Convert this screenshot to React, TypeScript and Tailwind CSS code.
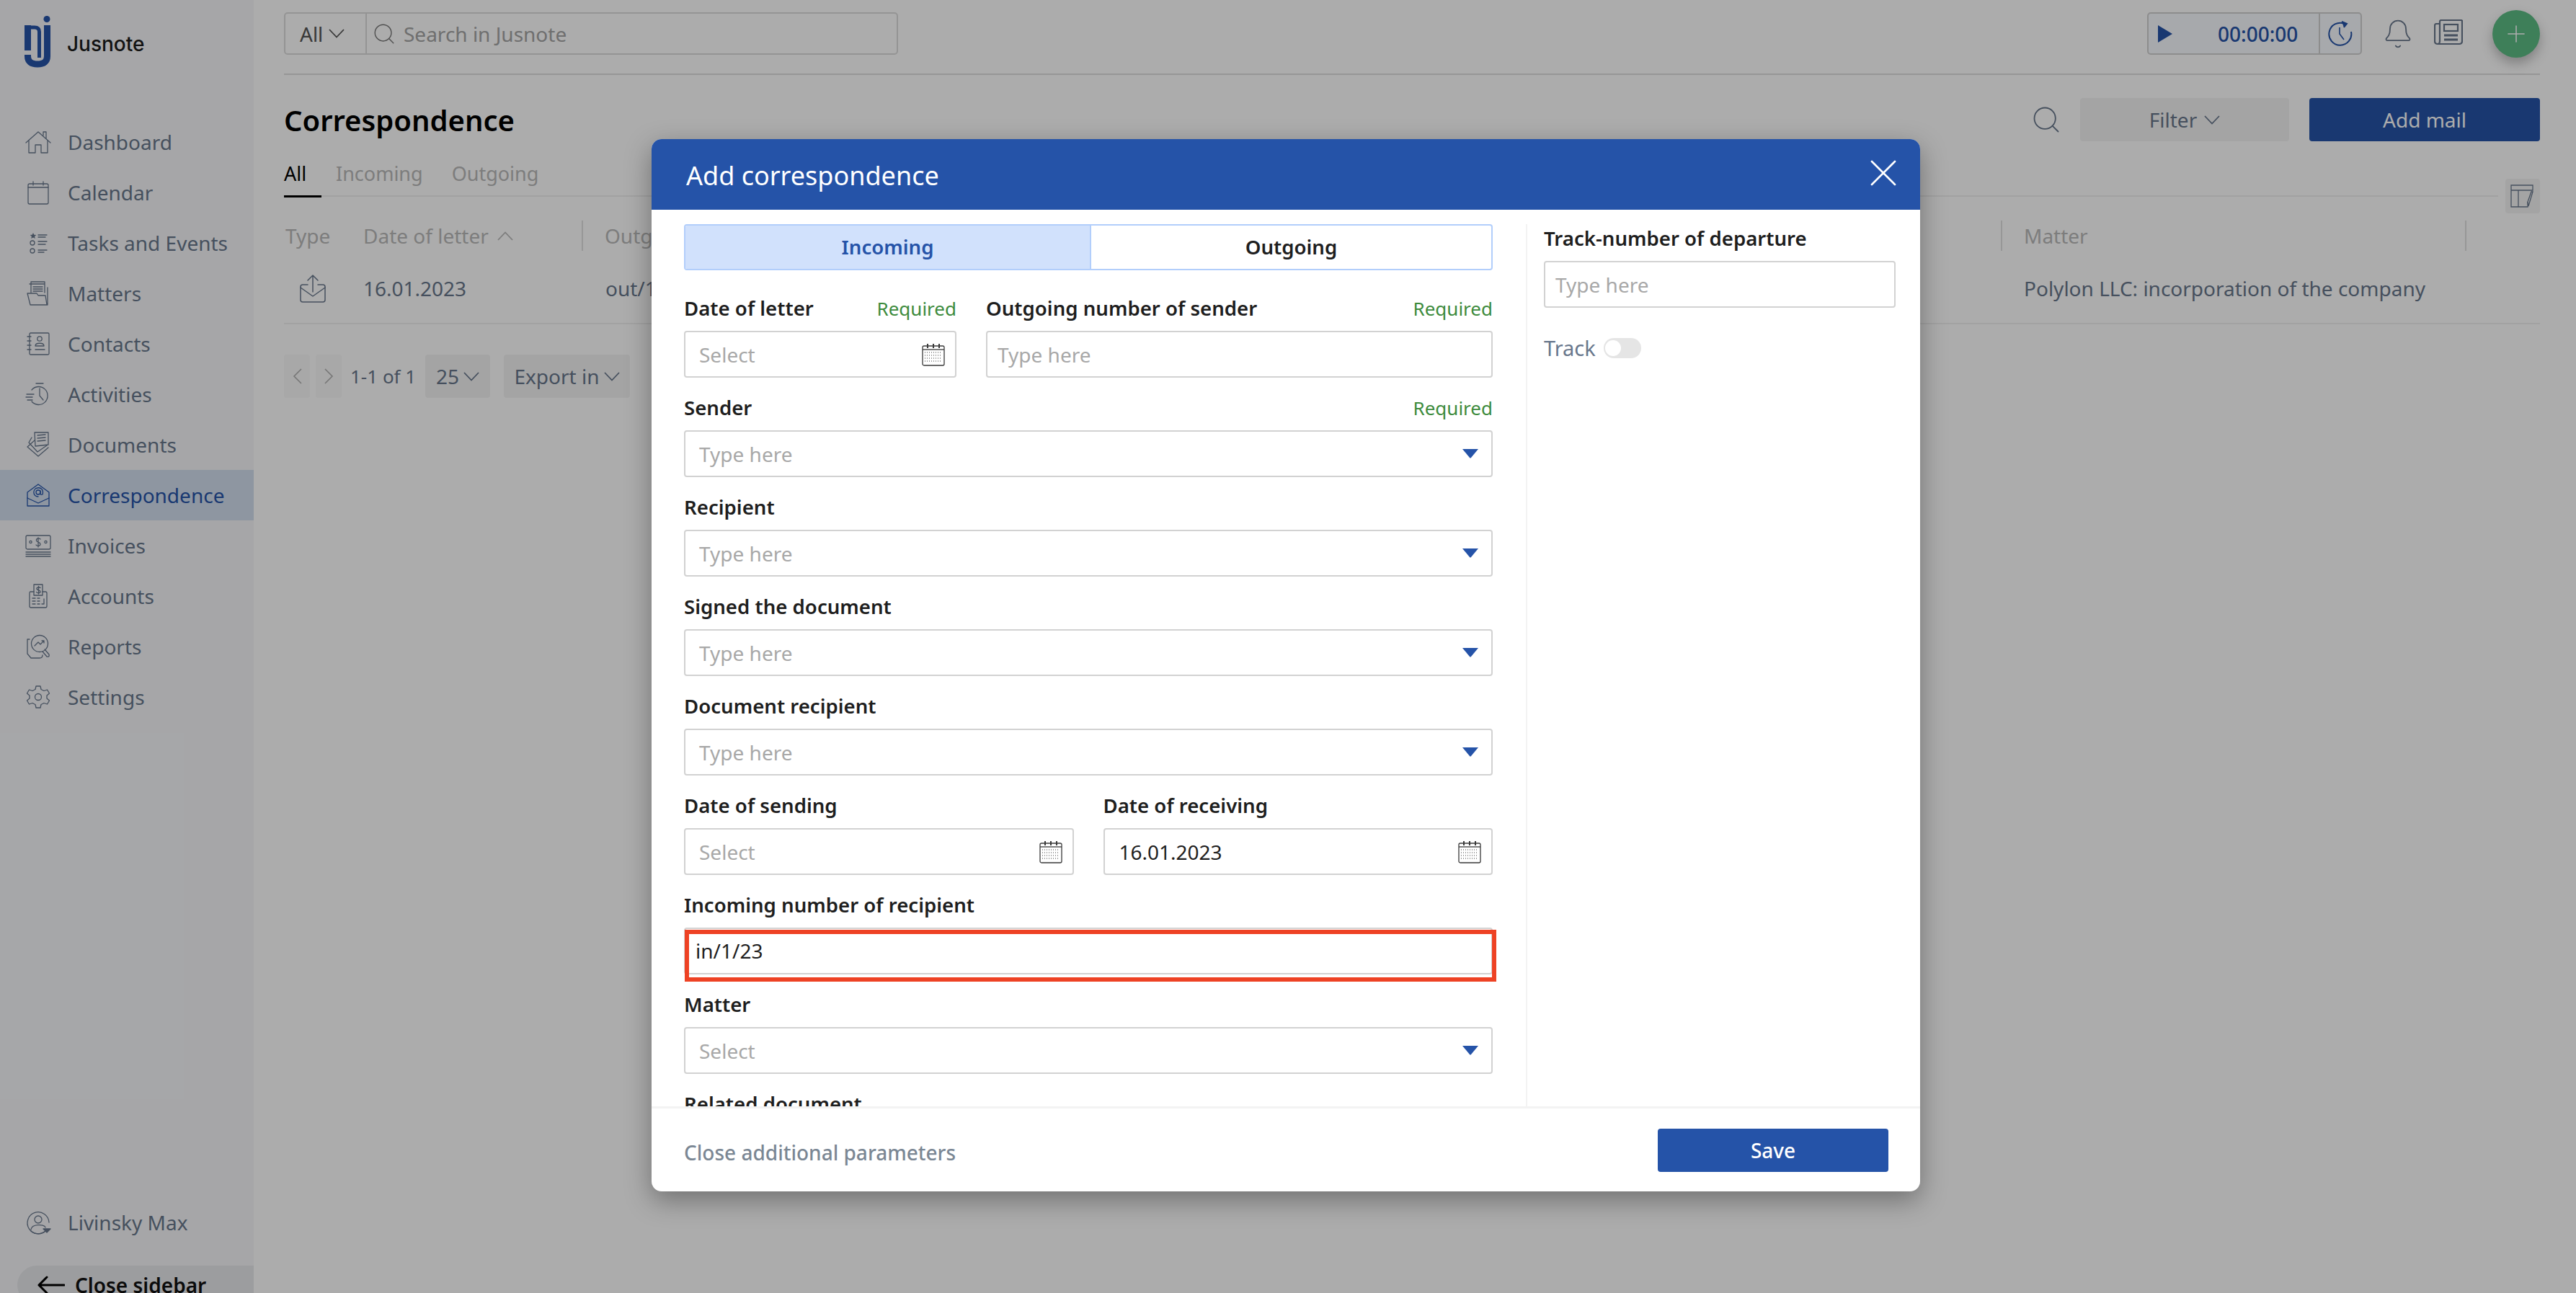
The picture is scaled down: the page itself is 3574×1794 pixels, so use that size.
import type { ReactNode } from 'react';
import { Search, Bell, Plus, X } from 'lucide-react';

const Ico = ({ children, size = 36 }: { children: ReactNode; size?: number }) => (
  <svg width={size} height={size} viewBox="0 0 36 36" fill="none" stroke="currentColor" strokeWidth="1.3" strokeLinecap="round" strokeLinejoin="round" className="shrink-0">
    {children}
  </svg>
);

const Chev = ({ dir = 'down', className = '' }: { dir?: 'down' | 'up'; className?: string }) => (
  <svg width="22" height="13" viewBox="0 0 22 13" fill="none" stroke="currentColor" strokeWidth="1.8" className={`shrink-0 ${className}`}>
    <path d={dir === 'down' ? 'M1 1 L11 11.5 L21 1' : 'M1 12 L11 1.5 L21 12'} />
  </svg>
);

const icons: Record<string, ReactNode> = {
  dashboard: (
    <>
      <path d="M1 19 L18 4 L35 19" />
      <path d="M5 16 V33 H14 V22 H22 V33 H31 V16" />
      <path d="M25 9 V4 H29 V13" />
    </>
  ),
  calendar: (
    <>
      <rect x="4" y="6" width="28" height="28" rx="2" />
      <path d="M4 11 H32 M11 3 V8 M25 3 V8" />
    </>
  ),
  tasks: (
    <>
      <path d="M11 4 l1.3 2.8 3 .3 -2.2 2 .6 3 -2.7-1.5 -2.7 1.5 .6-3 -2.2-2 3-.3 z" fill="currentColor" stroke="none" />
      <circle cx="10" cy="18" r="3" />
      <circle cx="10" cy="29" r="3" />
      <path d="M18 7 H30 M18 10 H28 M18 16 H30 M18 20 H28 M18 28 H30 M18 31 H26" />
    </>
  ),
  matters: (
    <>
      <path d="M8 17 V2 H27 V17 M6 5 H27" />
      <path d="M11 9 H24 M11 12 H24 M11 15 H24" />
      <path d="M31 10 V34 H7 L3 18 H16 L18 21 H28 L30 34" />
    </>
  ),
  contacts: (
    <>
      <rect x="6" y="3" width="27" height="30" rx="1.5" />
      <path d="M3 8 H8 M3 14 H8 M3 20 H8 M3 26 H8" />
      <circle cx="20" cy="11" r="3.2" />
      <path d="M14 21 C14 16 26 16 26 21 Z M14 26 H27" />
    </>
  ),
  activities: (
    <>
      <path d="M9 12 A12.5 12.5 0 1 1 9 28" />
      <path d="M15 3 H25 M20 10 V20 L25 26 M2 18 H12 M1 22 H10 M3 26 H10" />
    </>
  ),
  documents: (
    <>
      <path d="M13 12 L3 21 L18 34 L32 22" />
      <path d="M9 8 L5 15 L17 28 L30 19" />
      <path d="M13 1 H32 V18 L14 20 Z" fill="#f6f7fa" />
      <path d="M17 5 L28 4 M17 9 L28 8 M17 13 L28 12" />
    </>
  ),
  correspondence: (
    <>
      <path d="M3 14 L18 3 L33 14 V33 H3 Z" />
      <path d="M3 22 L18 29 L33 22" />
      <circle cx="18" cy="14" r="3" />
      <path d="M21 12 V16 Q21 18 24 17 C26 10 21 7 17 8 C10 9 10 20 18 20" />
    </>
  ),
  invoices: (
    <>
      <rect x="1" y="4" width="34" height="19" rx="2" />
      <circle cx="7.5" cy="13" r="1.6" />
      <circle cx="28.5" cy="13" r="1.6" />
      <path d="M21 9 C19 7 15 8 15.5 11 C16 14 21 13 21 16 C21 19 16 19 15 17 M18 7 V20" />
      <path d="M1 27 H35 M1 30 H35 M1 33 H35" />
    </>
  ),
  accounts: (
    <>
      <path d="M12 12 H7 Q6 12 6 14 V32 Q6 34 8 34 H28 Q30 34 30 32 V14 Q30 12 28 12 H24" />
      <rect x="12" y="2" width="12" height="15" />
      <path d="M21 6.5 C19.5 5 15.5 6 16 8 C16.5 10.5 21 9.5 21 12 C21 14.5 16.5 14 15.5 12.5 M18.5 4.5 V15" />
      <path d="M10 21 H14 M17 21 H20 M10 25 H14 M17 25 H20 M10 29 H14 M17 29 H20 M26 22 V29 H23" />
    </>
  ),
  reports: (
    <>
      <path d="M6 8 H3 V28 L8 34 H20 Q24 34 24 30" />
      <circle cx="20" cy="14" r="11.5" />
      <path d="M13 17 L18 12 L21 15 L26 10 M23 10 H26 V13" />
      <path d="M27 22 L33 29 Q34 33 30 32 L24 25" />
    </>
  ),
  settings: (
    <>
      <path d="M15 3 H21 L22 7.5 L26 9.5 L30.5 8 L33.5 13 L30 16 V20 L33.5 23 L30.5 28 L26 26.5 L22 28.5 L21 33 H15 L14 28.5 L10 26.5 L5.5 28 L2.5 23 L6 20 V16 L2.5 13 L5.5 8 L10 9.5 L14 7.5 Z" />
      <circle cx="18" cy="18" r="4.5" />
    </>
  ),
  user: (
    <>
      <path d="M29 29 A15 15 0 1 1 33 18" />
      <path d="M29 29 A15 15 0 0 1 8 30" />
      <circle cx="18" cy="14" r="5" />
      <path d="M8 28 C9 20 26 20 28 25" />
      <path d="M25 27 H35 L30 32 Z" fill="currentColor" />
    </>
  ),
};

const nav = [
  ['Dashboard', 'dashboard'],
  ['Calendar', 'calendar'],
  ['Tasks and Events', 'tasks'],
  ['Matters', 'matters'],
  ['Contacts', 'contacts'],
  ['Activities', 'activities'],
  ['Documents', 'documents'],
  ['Correspondence', 'correspondence'],
  ['Invoices', 'invoices'],
  ['Accounts', 'accounts'],
  ['Reports', 'reports'],
  ['Settings', 'settings'],
];

const CalIcon = () => (
  <svg width="32" height="32" viewBox="0 0 32 32" fill="none" stroke="#3a3a3a" strokeWidth="1.3" className="shrink-0">
    <rect x="1" y="4" width="30" height="27" rx="2" />
    <path d="M1 9 H31" />
    <path d="M8 1 V7 M16 1 V7 M24 1 V7" strokeWidth="2" />
    <path d="M4 13 H28 M4 17 H28 M4 21 H28 M4 25 H28" strokeDasharray="1 2" strokeWidth="1" />
  </svg>
);

const Tri = () => (
  <svg width="22" height="13" viewBox="0 0 22 13" className="shrink-0">
    <path d="M0 0 H22 L12 12 Q11 13 10 12 Z" fill="#2553a8" />
  </svg>
);

const Label = ({ text, required }: { text: string; required?: boolean }) => (
  <div className="mt-[16px] mb-[16px] flex h-[30px] items-center justify-between">
    <span className="text-[27.6px] font-semibold text-[#1e1e1e]">{text}</span>
    {required && <span className="text-[26px] text-[#3d8b3d]">Required</span>}
  </div>
);

const Box = ({ children, className = '' }: { children: ReactNode; className?: string }) => (
  <div className={`flex h-[65px] items-center rounded-[4px] border-2 border-[#d2d2d2] bg-white text-[28px] ${className}`}>
    {children}
  </div>
);

const Hint = ({ children }: { children: ReactNode }) => <span className="text-[#a8a8a8]">{children}</span>;

const SelectField = ({ label, hint, required }: { label: string; hint: string; required?: boolean }) => (
  <div className="pb-[11px]">
    <Label text={label} required={required} />
    <Box className="justify-between pl-[19px] pr-[18px]">
      <Hint>{hint}</Hint>
      <Tri />
    </Box>
  </div>
);

export default function App() {
  return (
    <div className="relative flex h-[1794px] w-full overflow-hidden bg-white font-['Noto_Sans',sans-serif] text-[#68778c]">
      {/* sidebar */}
      <aside className="flex h-[1794px] w-[352px] shrink-0 flex-col bg-[#f6f7fa]">
        <div className="flex h-[162px] shrink-0 items-start pl-[34px] pt-[22px]">
          <svg width="36" height="72" viewBox="0 0 36 72" fill="none" stroke="#2553a8" strokeWidth="9">
            <circle cx="31" cy="4.5" r="4.5" fill="#2553a8" stroke="none" />
            <path d="M4.5 46 V16 H14 Q20.5 16 20.5 22 V58" strokeWidth="5" />
            <path d="M4.5 48 V13" />
            <path d="M4.5 54 V56 Q4.5 67 18 67 Q31.5 67 31.5 56 V13" />
          </svg>
          <span className="ml-[23px] mt-[20px] font-['Inter',sans-serif] text-[28px] font-medium leading-[38px] text-[#1c1c1c]">Jusnote</span>
        </div>
        {nav.map(([name, icon]) => (
          <div
            key={name}
            className={`flex h-[70px] shrink-0 items-center gap-[23px] pl-[35px] text-[28px] ${name === 'Correspondence' ? 'bg-[#d3dfef] text-[#2553a8]' : ''}`}
          >
            <Ico>{icons[icon]}</Ico>
            <span>{name}</span>
          </div>
        ))}
        <div className="mt-auto flex h-[70px] shrink-0 items-center gap-[23px] pl-[35px] text-[28px]">
          <Ico>{icons.user}</Ico>
          <span>Livinsky Max</span>
        </div>
        <div className="mt-[25px] h-[38px] shrink-0 overflow-hidden pl-[24px]">
          <div className="flex h-[54px] items-center gap-[14px] rounded-l-[27px] bg-[#e8e9ec] pl-[28px] text-[28px] font-semibold text-[#111111]">
            <svg width="38" height="26" viewBox="0 0 38 26" fill="none" stroke="#000" strokeWidth="3" strokeLinecap="round" strokeLinejoin="round">
              <path d="M37 13 H2 M13 2 L2 13 L13 24" />
            </svg>
            <span>Close sidebar</span>
          </div>
        </div>
      </aside>

      {/* main */}
      <main className="min-w-0 flex-1 pl-[42px] pr-[50px]">
        <div className="flex h-[104px] items-start justify-between border-b-2 border-[#dedede] pt-[17px]">
          <div className="flex h-[59px] w-[852px] rounded-[5px] border-2 border-[#dcdcdc] text-[28px]">
            <div className="flex w-[113px] items-center gap-[8px] border-r-2 border-[#dcdcdc] pl-[20px] text-[#555555]">
              All <Chev />
            </div>
            <div className="flex items-center gap-[10px] pl-[7px] text-[#a5a5a5]">
              <Search size={34} strokeWidth={1} className="text-[#777777]" />
              <span>Search in Jusnote</span>
            </div>
          </div>
          <div className="flex items-start">
            <div className="flex h-[59px] w-[298px] rounded-[5px] border-2 border-[#d2d2d2] bg-[#f8fbff]">
              <div className="flex w-[236px] items-center pl-[12px] text-[#2553a8]">
                <svg width="22" height="26" viewBox="0 0 22 26">
                  <path d="M1 1 L21 13 L1 25 Z" fill="#2553a8" />
                </svg>
                <span className="ml-[62px] text-[28px] font-medium">00:00:00</span>
              </div>
              <div className="flex flex-1 items-center justify-center border-l-2 border-[#d2d2d2] text-[#2553a8]">
                <svg width="36" height="36" viewBox="0 0 36 36" fill="none" stroke="currentColor" strokeWidth="2">
                  <path d="M24 4 A15.5 15.5 0 1 0 33 15" />
                  <path d="M20 1 L27 4 L23 9" fill="currentColor" />
                  <path d="M17 9 V18 L23 26" strokeWidth="1.6" />
                </svg>
              </div>
            </div>
            <Bell size={44} strokeWidth={1} className="ml-[28px] mt-[8px] text-[#68778c]" />
            <svg width="40" height="36" viewBox="0 0 40 36" fill="none" stroke="#68778c" strokeWidth="2.2" className="ml-[28px] mt-[10px]">
              <path d="M8 6 H3 Q1 6 1 9 V30 Q1 34 5 34 H35 Q39 34 39 30 V2 Q39 1 37 1 H10 Q8 1 8 3 V30 Q8 34 5 34" />
              <rect x="14" y="7" width="19" height="9" />
              <path d="M14 22 H33 M14 28 H33" strokeWidth="3" />
            </svg>
            <div className="-mt-[3px] ml-[41px] flex h-[66px] w-[66px] items-center justify-center rounded-full bg-[#5dbc85] text-white shadow-[0_8px_16px_rgba(0,0,0,0.25)]">
              <Plus size={38} strokeWidth={1} />
            </div>
          </div>
        </div>

        <div className="flex h-[92px] items-end justify-between">
          <h1 className="mb-[1px] text-[40px] font-semibold leading-[56px] text-black">Correspondence</h1>
          <div className="flex h-[60px] items-center">
            <Search size={44} strokeWidth={1} className="mr-[25px]" />
            <div className="flex h-[60px] w-[290px] items-center justify-center gap-[10px] rounded-[4px] bg-[#f4f4f4] text-[28px]">
              Filter <Chev />
            </div>
            <div className="ml-[28px] flex h-[60px] w-[320px] items-center justify-center rounded-[4px] bg-[#2553a8] text-[28px] text-white">
              Add mail
            </div>
          </div>
        </div>

        <div className="flex h-[77px] items-end justify-between">
          <div className="flex h-[77px] w-[3072px] border-b-2 border-[#efefef] text-[27px] text-[#b9b9b9]">
            <div className="mr-[20px] h-[78px] w-[52px] border-b-[3px] border-black pt-[25px] text-black">All</div>
            <div className="mr-[40px] pt-[25px]">Incoming</div>
            <div className="pt-[25px]">Outgoing</div>
          </div>
          <div className="mb-[-23px] flex h-[48px] w-[48px] items-center justify-center rounded-[4px] bg-[#f4f4f4]">
            <svg width="34" height="32" viewBox="0 0 34 32" fill="none" stroke="#68778c" strokeWidth="1.3">
              <path d="M24 24 V31 H1 V1 H31 V8 H1 M11 8 V31" />
              <path d="M31 10 L25 30 L24 24 L29 10 Z" />
            </svg>
          </div>
        </div>

        <div className="mt-[33px] flex h-[42px] items-center text-[28px] text-[#b9b9b9]">
          <div className="w-[110px] pl-[2px]">Type</div>
          <div className="flex h-[42px] w-[305px] items-center border-r-2 border-[#e0e0e0]">
            Date of letter <Chev dir="up" className="ml-[12px]" />
          </div>
          <div className="flex h-[42px] flex-1 items-center border-r-2 border-[#e0e0e0] pl-[30px]">Outgoing number</div>
          <div className="flex h-[42px] w-[644px] items-center border-r-2 border-[#e0e0e0] pl-[30px]">Matter</div>
          <div className="w-[102px]" />
        </div>
        <div className="flex h-[102px] items-center border-b-2 border-[#f0f0f0] pt-[3px] text-[28px]">
          <div className="w-[110px] pl-[22px]">
            <svg width="36" height="40" viewBox="0 0 36 40" fill="none" stroke="currentColor" strokeWidth="1.5" strokeLinejoin="round" strokeLinecap="round">
              <path d="M11 15 H4 Q1 15 1 18 V36 Q1 39 4 39 H32 Q35 39 35 36 V18 Q35 15 32 15 H25" />
              <path d="M1 19 L18 31 L35 19 M18 25 V2 M11 9 L18 2 L25 9" />
            </svg>
          </div>
          <div className="w-[305px]">16.01.2023</div>
          <div className="flex-1 pl-[31px]">out/1/23</div>
          <div className="w-[746px] pl-[30px]">Polylon LLC: incorporation of the company</div>
        </div>

        <div className="mt-[42px] flex h-[60px] items-center text-[28px]">
          <div className="flex h-[60px] w-[36px] items-center justify-center rounded-[4px] bg-[#f9f9f9] text-[#b0b0b0]">
            <svg width="13" height="22" viewBox="0 0 13 22" fill="none" stroke="currentColor" strokeWidth="1.6"><path d="M12 1 L2 11 L12 21" /></svg>
          </div>
          <div className="ml-[8px] flex h-[60px] w-[36px] items-center justify-center rounded-[4px] bg-[#f9f9f9] text-[#b0b0b0]">
            <svg width="13" height="22" viewBox="0 0 13 22" fill="none" stroke="currentColor" strokeWidth="1.6"><path d="M1 1 L11 11 L1 21" /></svg>
          </div>
          <span className="ml-[12px] w-[104px] whitespace-nowrap text-[26px]">1-1 of 1</span>
          <div className="flex h-[60px] w-[90px] items-center justify-center gap-[6px] rounded-[4px] bg-[#f4f4f4]">25 <Chev /></div>
          <div className="ml-[19px] flex h-[60px] w-[175px] items-center justify-center gap-[6px] whitespace-nowrap rounded-[4px] bg-[#f4f4f4]">Export in <Chev /></div>
        </div>
      </main>

      {/* modal over a dimmed page */}
      <div className="absolute inset-0 bg-black/[0.325] pl-[904px] pt-[193px]">
        <div className="w-[1760px] overflow-hidden rounded-[14px] bg-white shadow-[0_12px_36px_rgba(0,0,0,0.35)]">
          <div className="flex h-[98px] items-start justify-between bg-[#2553a8] pl-[48px] pr-[19px] text-white">
            <span className="mt-[26px] text-[36px] leading-[50px]">Add correspondence</span>
            <X size={64} strokeWidth={1} className="mt-[15px]" />
          </div>

          <div className="flex h-[1244px] overflow-hidden">
            <div className="w-[1213px] shrink-0 pl-[45px] pr-[46px] pt-[20px]">
              <div className="mb-[22px] flex h-[64px] overflow-hidden rounded-[4px] border-2 border-[#b2cefb] text-[27.6px] font-semibold">
                <div className="flex w-[563px] items-center justify-center border-r-2 border-[#b2cefb] bg-[#d1e1fc] text-[#2553a8]">Incoming</div>
                <div className="flex flex-1 items-center justify-center text-[#1e1e1e]">Outgoing</div>
              </div>

              <div className="flex gap-[41px] pb-[11px]">
                <div className="w-[378px]">
                  <Label text="Date of letter" required />
                  <Box className="justify-between pl-[19px] pr-[14px]">
                    <Hint>Select</Hint>
                    <CalIcon />
                  </Box>
                </div>
                <div className="flex-1">
                  <Label text="Outgoing number of sender" required />
                  <Box className="pl-[14px]">
                    <Hint>Type here</Hint>
                  </Box>
                </div>
              </div>

              <SelectField label="Sender" hint="Type here" required />
              <SelectField label="Recipient" hint="Type here" />
              <SelectField label="Signed the document" hint="Type here" />
              <SelectField label="Document recipient" hint="Type here" />

              <div className="flex gap-[41px] pb-[11px]">
                <div className="flex-1">
                  <Label text="Date of sending" />
                  <Box className="justify-between pl-[19px] pr-[14px]">
                    <Hint>Select</Hint>
                    <CalIcon />
                  </Box>
                </div>
                <div className="flex-1">
                  <Label text="Date of receiving" />
                  <Box className="justify-between pl-[20px] pr-[14px] text-[#1e1e1e]">
                    16.01.2023
                    <CalIcon />
                  </Box>
                </div>
              </div>

              <div className="pb-[11px]">
                <Label text="Incoming number of recipient" />
                <div className="relative">
                  <Box className="pl-[14px] text-[#1e1e1e]">
                    <span className="-mt-[2px]">in/1/23</span>
                  </Box>
                  <div className="absolute left-[1px] top-[3px] h-[72px] w-[1126px] border-[6px] border-[#ee4224]" />
                </div>
              </div>

              <SelectField label="Matter" hint="Select" />
              <SelectField label="Related document" hint="Select" />
            </div>

            <div className="mt-[20px] flex-1 border-l-2 border-[#f3f3f3] pl-[23px]">
              <div className="flex h-[40px] items-center text-[27.6px] font-semibold text-[#1e1e1e]">Track-number of departure</div>
              <Box className="mt-[11px] w-[488px] pl-[14px]">
                <Hint>Type here</Hint>
              </Box>
              <div className="mt-[41px] flex h-[30px] items-center gap-[11px] text-[29px]">
                Track
                <div className="flex h-[28px] w-[52px] items-center rounded-full bg-[#e5e5e5] pl-[2px]">
                  <div className="h-[22px] w-[22px] rounded-full bg-white" />
                </div>
              </div>
            </div>
          </div>

          <div className="flex h-[118px] items-center justify-between border-t-[3px] border-[#f3f3f3] pl-[45px] pr-[44px]">
            <span className="mt-[6px] text-[28px] font-medium text-[#7b8794]">Close additional parameters</span>
            <div className="flex h-[60px] w-[320px] items-center justify-center rounded-[4px] bg-[#2553a8] text-[28px] font-medium text-white">Save</div>
          </div>
        </div>
      </div>
    </div>
  );
}
